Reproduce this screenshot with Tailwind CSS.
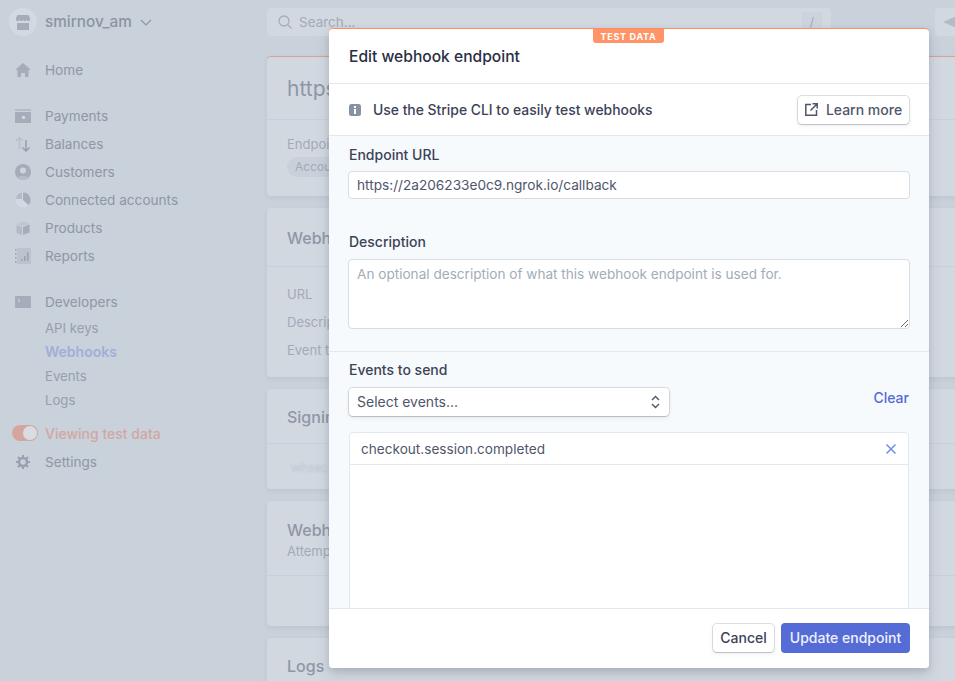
<!DOCTYPE html>
<html>
<head>
<meta charset="utf-8">
<script src="https://cdn.jsdelivr.net/npm/@tailwindcss/browser@4"></script>
</head>
<body class="w-[955px] h-[681px] overflow-hidden bg-[#c9d1da] font-['Inter','Liberation_Sans',sans-serif] text-[14px] relative">
<div class="flex w-[955px] h-[681px] overflow-hidden">
  <!-- Sidebar -->
  <aside class="w-[267px] shrink-0 text-[#8f97a6]">
    <div class="flex items-center h-[28px] mt-[8px] ml-[9px]">
      <span class="w-[28px] h-[28px] rounded-full bg-[#d3d9e1] flex items-center justify-center">
        <svg width="14" height="15" viewBox="0 0 14 15"><path d="M1.500 0h11L14 3v1.500a1.700 1.700 0 0 1-3.500 0 1.700 1.700 0 0 1-3.500 0 1.700 1.700 0 0 1-3.500 0 1.700 1.700 0 0 1-3.500 0V3z" fill="#a5acba"/><path d="M1 8h12v7H1z" fill="#a5acba"/></svg>
      </span>
      <span class="ml-[8px] text-[15.300px] font-medium text-[#8c94a3]">smirnov_am</span>
      <svg class="ml-[8px]" width="12" height="12" viewBox="0 0 12 12" fill="none" stroke="#8f97a6" stroke-width="1.200"><path d="M1 4l5 5 5-5"/></svg>
    </div>
    <nav class="mt-[20px] flex flex-col text-[13.600px]">
      <a class="flex items-center h-[28px] pl-[15px] gap-[14px]"><svg width="16" height="16" viewBox="0 0 16 16"><path d="M8 1L0 8h2.500v7h3.500v-4h4v4h3.500V8H16z" fill="#a5acba"/></svg>Home</a>
      <div class="h-[18px]"></div>
      <a class="flex items-center h-[28px] pl-[15px] gap-[14px]"><svg width="16" height="14" viewBox="0 0 16 14"><path d="M0 0h16v2H0z" fill="#b4bbc7"/><path d="M0 3h16v11H0z" fill="#a5acba"/><circle cx="8.500" cy="8.500" r="1.800" fill="#d3d9e1"/></svg>Payments</a>
      <a class="flex items-center h-[28px] pl-[15px] gap-[14px]"><svg width="16" height="16" viewBox="0 0 16 16" fill="none"><path d="M4.500 13V2M1 5l3.500-3.500L8 5" stroke="#b8bfca" stroke-width="1.500"/><path d="M11 4v11M7.500 11.500L11 15l3.500-3.500" stroke="#979fae" stroke-width="1.500"/></svg>Balances</a>
      <a class="flex items-center h-[28px] pl-[15px] gap-[14px]"><svg width="16" height="16" viewBox="0 0 16 16"><circle cx="8" cy="8" r="8" fill="#a5acba"/><circle cx="8" cy="6.500" r="3" fill="#cfd5dd"/><path d="M2.500 14c1-3 10-3 11 0a8 8 0 0 1-11 0z" fill="#b7bdc9"/></svg>Customers</a>
      <a class="flex items-center h-[28px] pl-[15px] gap-[14px]"><svg width="16" height="16" viewBox="0 0 16 16"><circle cx="8" cy="8" r="7.500" fill="#d3d9e1"/><path d="M8 .5a7.500 7.500 0 0 1 5.500 12.600L8 8z" fill="#a5acba"/><path d="M1.500 4.500A7.500 7.500 0 0 1 7 .6V7H1z" fill="#b4bbc7"/></svg>Connected accounts</a>
      <a class="flex items-center h-[28px] pl-[15px] gap-[14px]"><svg width="16" height="16" viewBox="0 0 16 16"><path d="M1.500 4L9 1.500 14.500 3.500 7 6z" fill="#c0c6d1"/><path d="M1.500 5L7 7v8L1.500 13z" fill="#b4bbc7"/><path d="M8 7l6.500-2.500V12.500L8 15z" fill="#a5acba"/></svg>Products</a>
      <a class="flex items-center h-[28px] pl-[15px] gap-[14px]"><svg width="16" height="16" viewBox="0 0 16 16"><rect x="2" width="14" height="16" rx="1" fill="#bcc3ce"/><path d="M0 1h1.500v1.500H0zM0 5h1.500v1.500H0zM0 9h1.500v1.500H0zM0 13h1.500v1.500H0zM6 11h1.500v2H6zM9 8h1.500v5H9zM12 4.500h1.500V13H12z" fill="#99a1b0"/></svg>Reports</a>
      <div class="h-[18px]"></div>
      <a class="flex items-center h-[28px] pl-[15px] gap-[14px]"><svg width="16" height="12" viewBox="0 0 16 12"><rect width="16" height="12" rx="1" fill="#a5acba"/><path d="M3 3l2 1.500L3 6" stroke="#d3d9e1" fill="none"/></svg>Developers</a>
      <div class="flex flex-col pt-[1px] pl-[45px] text-[13.200px] text-[#979fae]">
        <a class="h-[24px] flex items-center">API keys</a>
        <a class="h-[24px] pb-[3px] flex items-center font-semibold text-[14px] text-[#a1aed8]">Webhooks</a>
        <a class="h-[24px] flex items-center">Events</a>
        <a class="h-[24px] flex items-center">Logs</a>
      </div>
      <a class="flex items-center h-[28px] mt-[6px] pl-[12px] gap-[7px] text-[14px] font-medium text-[#d1a7a2]"><span class="w-[26px] h-[16px] rounded-full bg-[#d5a69e] flex justify-end items-center pr-[1px]"><span class="w-[14px] h-[14px] rounded-full bg-[#d8dde4]"></span></span>Viewing test data</a>
      <a class="flex items-center h-[28px] mt-[1px] pl-[15px] gap-[14px]"><svg width="16" height="16" viewBox="0 0 16 16" fill="none"><circle cx="8" cy="8" r="4" stroke="#99a1b0" stroke-width="2.500"/><path d="M8 1v2.500M8 12.500V15M1 8h2.500M12.500 8H15M3 3l2 2M11 11l2 2M13 3l-2 2M5 11l-2 2" stroke="#99a1b0" stroke-width="2"/></svg>Settings</a>
    </nav>
  </aside>
  <!-- Main -->
  <main class="w-[720px] shrink-0 text-[#a3aab7]">
    <div class="flex items-start h-[56px] pt-[8px]">
      <div class="w-[564px] h-[28px] rounded-[4px] bg-[#d2d8e0] flex items-center pl-[11px] relative">
        <svg width="14" height="14" viewBox="0 0 14 14" fill="none" stroke="#a5acba" stroke-width="1.300"><circle cx="6" cy="6" r="5"/><path d="M10 10l3.500 3.500"/></svg>
        <span class="ml-[7px] text-[13.500px] text-[#a3aab7]">Search...</span>
        <span class="absolute right-[9px] top-[4px] w-[20px] h-[20px] rounded-[3px] bg-[#ccd3dc] flex items-center justify-center text-[12px]">/</span>
      </div>
      <div class="ml-[104px] w-[50px] h-[28px] rounded-[4px] bg-[#d2d8e0] flex items-center pl-[8px]"><svg width="16" height="14" viewBox="0 0 16 14"><path d="M0 7l14-6v12z" fill="#b4bbc7"/></svg></div>
    </div>
    <div class="flex flex-col gap-[12px]">
      <section class="h-[140px] rounded-[4px] bg-[#d2d8e0] border-t border-[#d9a38f] shadow-[0_2px_5px_rgba(60,66,87,0.08)]">
        <div class="h-[63px] pl-[20px] pt-[2px] flex items-center border-b border-[#c9d0d9] text-[21px] text-[#8f97a6] justify-between">https<span class="mt-[9px] h-[29px] flex items-center border-b border-[#c3cad4] text-[13px] text-[#a3aab7] mr-[-6px]">est w</span></div>
        <div class="pl-[20px] pt-[15px] text-[13px] leading-[18px]"><div>Endpoint</div><div class="mt-[4px] w-fit rounded-full bg-[#c9d0d9] px-[8px] h-[20px] leading-[20px] text-[12px]">Account</div></div>
      </section>
      <section class="h-[169px] rounded-[4px] bg-[#d2d8e0] shadow-[0_2px_5px_rgba(60,66,87,0.08)]">
        <div class="h-[59px] pl-[20px] pt-[1px] flex items-center border-b border-[#c9d0d9] text-[16px] font-medium text-[#8f97a6]">Webhook</div>
        <div class="pl-[20px] pt-[18px] text-[13px] flex flex-col gap-[10px] leading-[18px]"><span>URL</span><span>Description</span><span>Event types</span></div>
      </section>
      <section class="h-[100px] rounded-[4px] bg-[#d2d8e0] shadow-[0_2px_5px_rgba(60,66,87,0.08)]">
        <div class="h-[55px] pl-[20px] pt-[1px] flex items-center border-b border-[#c9d0d9] text-[16px] font-medium text-[#8f97a6]">Signing</div>
        <div class="pl-[24px] pt-[15px] text-[12px] text-[#bcc3ce] blur-[1px]">whsec</div>
      </section>
      <section class="h-[125px] rounded-[4px] bg-[#d2d8e0] shadow-[0_2px_5px_rgba(60,66,87,0.08)]">
        <div class="h-[75px] pl-[20px] pt-[19px] border-b border-[#c9d0d9] leading-[21px]"><div class="text-[16px] font-medium text-[#8f97a6]">Webhook</div><div class="text-[13px]">Attempts</div></div>
      </section>
      <section class="h-[100px] rounded-[4px] bg-[#d2d8e0] shadow-[0_2px_5px_rgba(60,66,87,0.08)]">
        <div class="pl-[20px] pt-[16px] text-[16px] font-medium text-[#8f97a6]">Logs</div>
      </section>
    </div>
  </main>
</div>

<!-- Modal -->
<div class="absolute left-[329px] top-[28px] w-[600px] h-[640px] rounded-[4px] overflow-hidden bg-white border-t border-[#ff8f5f] shadow-[0_7px_14px_rgba(60,66,87,0.15),0_3px_6px_rgba(0,0,0,0.1)] flex flex-col text-[#3c4257]">
  <span class="absolute left-[264px] top-0 h-[14px] w-[71px] pt-[1px] bg-[#ff9468] text-white text-[9px] font-bold tracking-[0.7px] flex items-center justify-center rounded-b-[3px]">TEST DATA</span>
  <header class="h-[55px] shrink-0 flex items-center px-[20px] pt-[1px] border-b border-[#e3e8ee] text-[15.600px] font-medium text-[#2a2f45]">Edit webhook endpoint</header>
  <div class="h-[52px] shrink-0 flex items-center pl-[20px] pr-[20px] border-b border-[#e3e8ee] font-medium">
    <svg width="12" height="12" viewBox="0 0 12 12"><rect width="12" height="12" rx="2.500" fill="#8792a2"/><rect x="5" y="5" width="2" height="5" fill="#fff"/><rect x="5" y="2" width="2" height="2" fill="#fff"/></svg>
    <span class="ml-[12px] pt-[2px] text-[13.900px]">Use the Stripe CLI to easily test webhooks</span>
    <button class="ml-auto h-[28px] w-[111px] rounded-[4px] bg-white shadow-[0_0_0_1px_rgba(60,66,87,0.16),0_1px_1px_rgba(0,0,0,0.12),0_2px_5px_rgba(60,66,87,0.08)] flex items-center justify-center gap-[8px] font-medium text-[#4f566b]">
      <svg width="13" height="13" viewBox="0 0 13 13" fill="none" stroke="#4f566b" stroke-width="1.500"><path d="M6 1.500H.8v10.700h10.700V7M7.500.8h4.700v4.700M12 1L5.500 7.500"/></svg>Learn more
    </button>
  </div>
  <div class="flex-1 min-h-0 overflow-hidden bg-[#f7fafc]">
    <div class="px-[19px]">
      <label class="block pl-px pt-[9px] leading-[20px] font-medium text-[#3c4257]">Endpoint URL</label>
      <input class="block mt-[6px] w-full h-[28px] rounded-[4px] bg-white border border-[#d8dde4] px-[8px] text-[13.650px] text-[#4f566b] outline-none" value="https://2a206233e0c9.ngrok.io/callback">
      <label class="block pl-px mt-[33px] leading-[20px] font-medium text-[#3c4257]">Description</label>
      <textarea class="block mt-[7px] w-full h-[70px] rounded-[4px] bg-white border border-[#d8dde4] px-[8px] py-[4px] text-[13.600px] leading-[20px] text-[#4f566b] placeholder:text-[#a3acb9] outline-none" placeholder="An optional description of what this webhook endpoint is used for."></textarea>
    </div>
    <div class="mt-[22px] border-t border-[#e3e8ee] px-[19px]">
      <label class="block pl-px pt-[8px] leading-[20px] font-medium text-[#3c4257]">Events to send</label>
      <div class="flex items-center justify-between mt-[7px]">
        <div class="ml-[1px] w-[320px] h-[28px] rounded-[4px] bg-white shadow-[0_0_0_1px_rgba(60,66,87,0.16),0_1px_1px_rgba(0,0,0,0.12),0_2px_5px_rgba(60,66,87,0.08)] flex items-center justify-between pl-[8px] pr-[9px] text-[#4f566b]">Select events...
          <svg width="9" height="14" viewBox="0 0 9 14" fill="none" stroke="#4f566b" stroke-width="1.400"><path d="M1 5l3.500-3.500L8 5M1 9l3.500 3.500L8 9"/></svg>
        </div>
        <a class="font-medium text-[#5469d4] mr-[1px] mb-[8px]">Clear</a>
      </div>
      <div class="mx-[1px] mt-[16px] h-[300px] rounded-t-[4px] bg-white border border-[#e3e8ee]">
        <div class="h-[32px] flex items-center justify-between pl-[11px] pr-[12px] border-b border-[#e3e8ee] text-[13.600px] text-[#4f566b]"><span class="pt-[1px]">checkout.session.completed</span>
          <svg width="10" height="10" viewBox="0 0 10 10" stroke="#6c8eef" stroke-width="1.500"><path d="M.5.5l9 9M9.500.5l-9 9"/></svg>
        </div>
      </div>
    </div>
  </div>
  <footer class="relative h-[60px] shrink-0 flex items-center justify-end gap-[7px] pr-[19px] pb-[2px] bg-white border-t border-[#e3e8ee]">
    <button class="w-[61px] h-[28px] rounded-[4px] bg-white shadow-[0_0_0_1px_rgba(60,66,87,0.16),0_1px_1px_rgba(0,0,0,0.12),0_2px_5px_rgba(60,66,87,0.08)] font-medium text-[#3c4257]">Cancel</button>
    <button class="w-[129px] h-[30px] rounded-[4px] bg-[#556cd6] font-medium text-[#eef1fb]">Update endpoint</button>
  </footer>
</div>
</body>
</html>
